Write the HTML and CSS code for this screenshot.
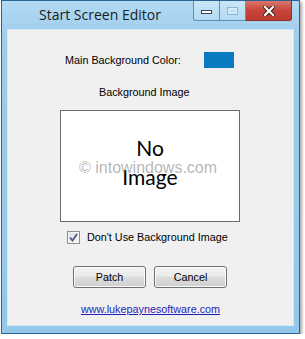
FILE: index.html
```html
<!DOCTYPE html>
<html>
<head>
<meta charset="utf-8">
<title>Start Screen Editor</title>
<link rel="stylesheet" href="styles.css">
</head>
<body>
<div class="window">
  <div class="titlebar">
    <div class="title">Start Screen Editor</div>
    <div class="controls">
      <div class="ctl ctl-min"><span class="min-glyph"></span></div>
      <div class="ctl ctl-max"><span class="max-glyph"></span></div>
      <div class="ctl ctl-close">
        <svg width="12" height="10" viewBox="0 0 12 10"><path d="M2 1 L10 9 M10 1 L2 9" stroke="#3a1a18" stroke-width="4" stroke-linecap="square"/><path d="M2 1 L10 9 M10 1 L2 9" stroke="#ffffff" stroke-width="2.2" stroke-linecap="square"/></svg>
      </div>
    </div>
  </div>
  <div class="client">
    <div class="color-row">
      <span class="label">Main Background Color:</span>
      <span class="swatch"></span>
    </div>
    <div class="section-label">Background Image</div>
    <div class="image-box">
      <div class="no-image">No<br>Image</div>
      <div class="watermark">© intowindows.com</div>
    </div>
    <div class="check-row">
      <span class="checkbox">
        <svg width="9" height="9" viewBox="0 0 9 9"><path d="M1 4.5 L3.5 7.5 L8 1" fill="none" stroke="#4a5c8f" stroke-width="1.8"/></svg>
      </span>
      <span class="check-text">Don't Use Background Image</span>
    </div>
    <div class="buttons">
      <div class="btn">Patch</div>
      <div class="btn">Cancel</div>
    </div>
    <div class="link-row"><a class="link" href="#">www.lukepaynesoftware.com</a></div>
  </div>
</div>
</body>
</html>
```
FILE: styles.css
```css
html, body {
  margin: 0;
  padding: 0;
  background: #ffffff;
}

.window {
  box-sizing: border-box;
  margin-left: 1px;
  width: 299px;
  height: 334px;
  border: 1px solid #2b6494;
  background: linear-gradient(#b2daf3, #9ccced 40px, #94c8eb);
  padding: 0 5px 7px 5px;
  display: flex;
  flex-direction: column;
  box-shadow: 2px 2px 3px rgba(0,0,0,0.35);
}

.titlebar {
  height: 28px;
  display: flex;
  flex-shrink: 0;
}

.title {
  flex: 1;
  text-align: center;
  font-family: "Open Sans", "Noto Sans", sans-serif;
  font-size: 14px;
  line-height: 28px;
  color: #1c1c1c;
}

.controls {
  display: flex;
  height: 20px;
  margin-right: 2px;
  align-self: flex-start;
}

.ctl {
  box-sizing: border-box;
  height: 20px;
  display: flex;
  align-items: center;
  justify-content: center;
  border: 1px solid #5e8fb7;
  border-top: none;
}

.ctl-min {
  width: 27px;
  background: linear-gradient(#c9e6f8, #b3daf2);
  border-bottom-left-radius: 3px;
}

.ctl-max {
  width: 26px;
  border-left: none;
  background: linear-gradient(#c9e6f8, #b3daf2);
}

.ctl-close {
  width: 46px;
  border-left: none;
  border-color: #8a2f27;
  background: linear-gradient(#d8786c, #c7443a 50%, #bf3a30);
  border-bottom-right-radius: 3px;
}

.min-glyph {
  display: block;
  width: 9px;
  height: 2px;
  margin-top: 3px;
  background: #ffffff;
  border: 1px solid #33475a;
}

.max-glyph {
  display: block;
  box-sizing: border-box;
  width: 11px;
  height: 8px;
  border: 1px solid #8fb5d2;
  box-shadow: inset 0 0 0 2px #d4ebf9;
}

.client {
  flex: 1;
  background: #f0f0f0;
  border: 1px solid #d2e9f8;
  font-family: "Liberation Sans", Arial, sans-serif;
  font-size: 10.8px;
  color: #000000;
  padding-top: 22px;
}

.color-row {
  display: flex;
  align-items: center;
  height: 16px;
  padding-left: 57px;
}

.swatch {
  display: block;
  width: 30px;
  height: 16px;
  margin-left: 23px;
  background: #0a7bc1;
}

.section-label {
  margin-top: 18px;
  line-height: 13px;
  padding-left: 91px;
}

.image-box {
  position: relative;
  box-sizing: border-box;
  margin-top: 11px;
  margin-left: 52px;
  width: 180px;
  height: 112px;
  background: #ffffff;
  border: 1px solid #6b6b6b;
  display: flex;
  align-items: center;
  justify-content: center;
}

.no-image {
  font-family: "Lato", "Open Sans", sans-serif;
  font-size: 21px;
  line-height: 29px;
  text-align: center;
  color: #000000;
  margin-top: -8px;
}

.watermark {
  position: absolute;
  left: 18px;
  top: 48px;
  font-family: "Liberation Sans", Arial, sans-serif;
  font-size: 16px;
  line-height: 18px;
  color: rgba(120,120,120,0.55);
  white-space: nowrap;
}

.check-row {
  display: flex;
  align-items: center;
  margin-top: 9px;
  margin-left: 59px;
  height: 13px;
}

.checkbox {
  box-sizing: border-box;
  width: 13px;
  height: 13px;
  border: 1px solid #8e8f8f;
  background: linear-gradient(135deg, #dcdcdc, #fbfbfb);
  display: flex;
  align-items: center;
  justify-content: center;
  box-shadow: inset 0 0 0 1px #f4f4f4;
}

.check-text {
  margin-left: 7px;
  line-height: 13px;
}

.buttons {
  display: flex;
  gap: 8px;
  margin-top: 22px;
  margin-left: 65px;
}

.btn {
  box-sizing: border-box;
  width: 73px;
  height: 22px;
  border: 1px solid #707070;
  border-radius: 3px;
  background: linear-gradient(#f2f2f2, #ebebeb 45%, #dddddd 50%, #cfcfcf);
  box-shadow: inset 0 0 0 1px #fbfbfb;
  text-align: center;
  line-height: 20px;
}

.link-row {
  margin-top: 15px;
  text-align: center;
  line-height: 13px;
}

.link {
  color: #1f1fb8;
  text-decoration: underline;
}
```
